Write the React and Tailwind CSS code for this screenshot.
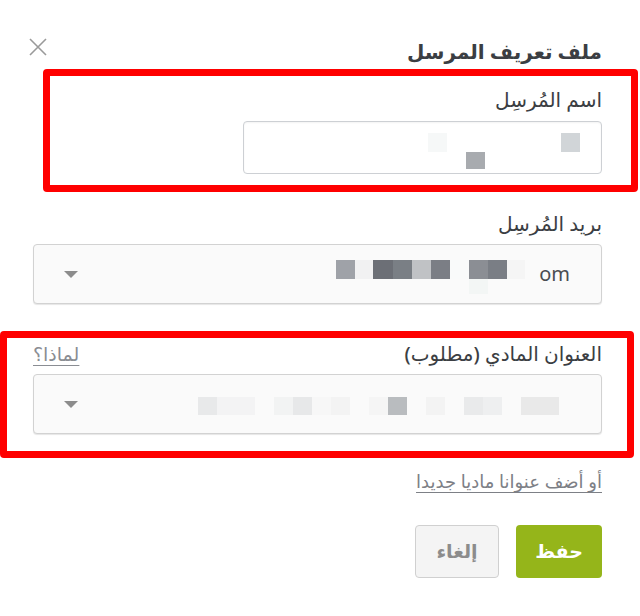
import React from 'react';

const font = { fontFamily: '"Noto Sans", "DejaVu Sans", sans-serif' };

const Mosaic = ({ width, height, blocks }) => (
  <svg width={width} height={height} viewBox={`0 0 ${width} ${height}`} className="block shrink-0">
    {blocks.map(([x, y, w, h, c], i) => (
      <rect key={i} x={x} y={y} width={w} height={h} fill={c} />
    ))}
  </svg>
);

const Caret = () => (
  <svg width="14" height="7" viewBox="0 0 14 7" className="block shrink-0">
    <path d="M0 0 L14 0 L7 7 Z" fill="#8c8c8c" />
  </svg>
);

const nameBlocks = [
  [317, 11, 19, 19, '#d1d5d8'],
  [184, 11, 19, 19, '#f6f8f8'],
  [222, 30, 19, 17, '#a8abaf'],
];

const emailBlocks = [
  [0, 15, 19, 19, '#9fa2a8'],
  [19, 15, 18, 19, '#f1f1f2'],
  [37, 15, 20, 19, '#6c6f76'],
  [57, 15, 19, 19, '#7a7f85'],
  [76, 15, 19, 19, '#c0c2c5'],
  [95, 15, 19, 19, '#7b7e85'],
  [114, 15, 19, 19, '#f9fafa'],
  [133, 15, 19, 19, '#8b8e94'],
  [152, 15, 19, 19, '#7a7e85'],
  [171, 15, 18, 19, '#f5f5f5'],
  [133, 34, 19, 15, '#f3f6f5'],
];

const addressBlocks = [
  [0, 0, 19, 18, '#e8e9ea'],
  [19, 0, 38, 18, '#f3f3f4'],
  [76, 0, 19, 18, '#f2f3f3'],
  [95, 0, 19, 18, '#e7e8e9'],
  [114, 0, 19, 18, '#f7f7f7'],
  [133, 0, 19, 18, '#f3f3f3'],
  [171, 0, 19, 18, '#f5f5f5'],
  [190, 0, 19, 18, '#b9bcbf'],
  [228, 0, 19, 18, '#f3f3f3'],
  [266, 0, 19, 18, '#e9eaeb'],
  [285, 0, 19, 18, '#eeeff0'],
  [323, 0, 38, 18, '#e9e9e9'],
];

export default function App() {
  return (
    <div dir="rtl" style={font} className="relative w-[640px] h-[616px] bg-white overflow-hidden pr-[38px] pl-[33px] text-[#3b3e43]">
      {/* Header */}
      <div className="flex items-start justify-between pt-[37px]">
        <h2 className="text-[20px] leading-[30px] font-semibold">ملف تعريف المرسل</h2>
        <button className="mt-[1px] -ml-[4px] text-[#9a9a9a]">
          <svg width="18" height="18" viewBox="0 0 18 18" className="block">
            <path d="M1 1 L17 17 M17 1 L1 17" stroke="currentColor" strokeWidth="1.6" fill="none" />
          </svg>
        </button>
      </div>

      {/* Sender name */}
      <label className="block mt-[21px] text-[20px] leading-[24px] font-medium">اسم المُرسِل</label>
      <div className="mt-[9px] w-[359px] h-[53px] rounded-[4px] border border-[#cdd0d4] bg-white shadow-[inset_0_1px_2px_rgba(0,0,0,0.05)] overflow-hidden" dir="ltr">
        <Mosaic width={357} height={51} blocks={nameBlocks} />
      </div>

      {/* Sender email */}
      <label className="block mt-[38px] text-[20px] leading-[24px] font-medium">بريد المُرسِل</label>
      <div className="mt-[8px] h-[60px] rounded-[4px] border border-[#d2d2d2] bg-[#fafafa] shadow-[0_1px_1px_rgba(0,0,0,0.1)] flex items-center justify-between pr-[31px] pl-[30px]">
        <div className="flex items-center gap-[14px]">
          <span dir="ltr" className="text-[20px] leading-[24px] text-[#4a4d52]">om</span>
          <Mosaic width={189} height={58} blocks={emailBlocks} />
        </div>
        <Caret />
      </div>

      {/* Physical address */}
      <div className="mt-[38px] flex items-center justify-between">
        <label className="text-[20px] leading-[24px] font-medium">العنوان المادي (مطلوب)</label>
        <a href="#" className="text-[19px] leading-[24px] text-[#8a8d93] underline underline-offset-[4px]">لماذا؟</a>
      </div>
      <div className="mt-[8px] h-[60px] rounded-[4px] border border-[#d2d2d2] bg-[#fafafa] shadow-[0_1px_1px_rgba(0,0,0,0.1)] flex items-center justify-between pr-[42px] pl-[30px]">
        <div className="mt-[4px]">
          <Mosaic width={361} height={18} blocks={addressBlocks} />
        </div>
        <Caret />
      </div>

      <a href="#" className="block w-fit mt-[36px] text-[18px] leading-[22px] text-[#7d8086] underline underline-offset-[4px]">أو أضف عنوانا ماديا جديدا</a>

      {/* Actions */}
      <div className="mt-[33px] flex gap-[17px]">
        <button className="w-[86px] h-[53px] rounded-[4px] bg-[#95b51a] text-white text-[19px] font-bold">حفظ</button>
        <button className="w-[84px] h-[53px] rounded-[4px] bg-[#f4f4f4] border border-[#d0d0d0] text-[#8c8c8c] text-[19px] font-bold">إلغاء</button>
      </div>

      {/* Annotation overlays */}
      <div className="absolute left-[43px] top-[69px] w-[595px] h-[123px] border-[7px] border-[#ff0000] rounded-[4px] pointer-events-none" />
      <div className="absolute left-0 top-[331px] w-[634px] h-[127px] border-[7px] border-[#ff0000] rounded-[4px] pointer-events-none" />
    </div>
  );
}
